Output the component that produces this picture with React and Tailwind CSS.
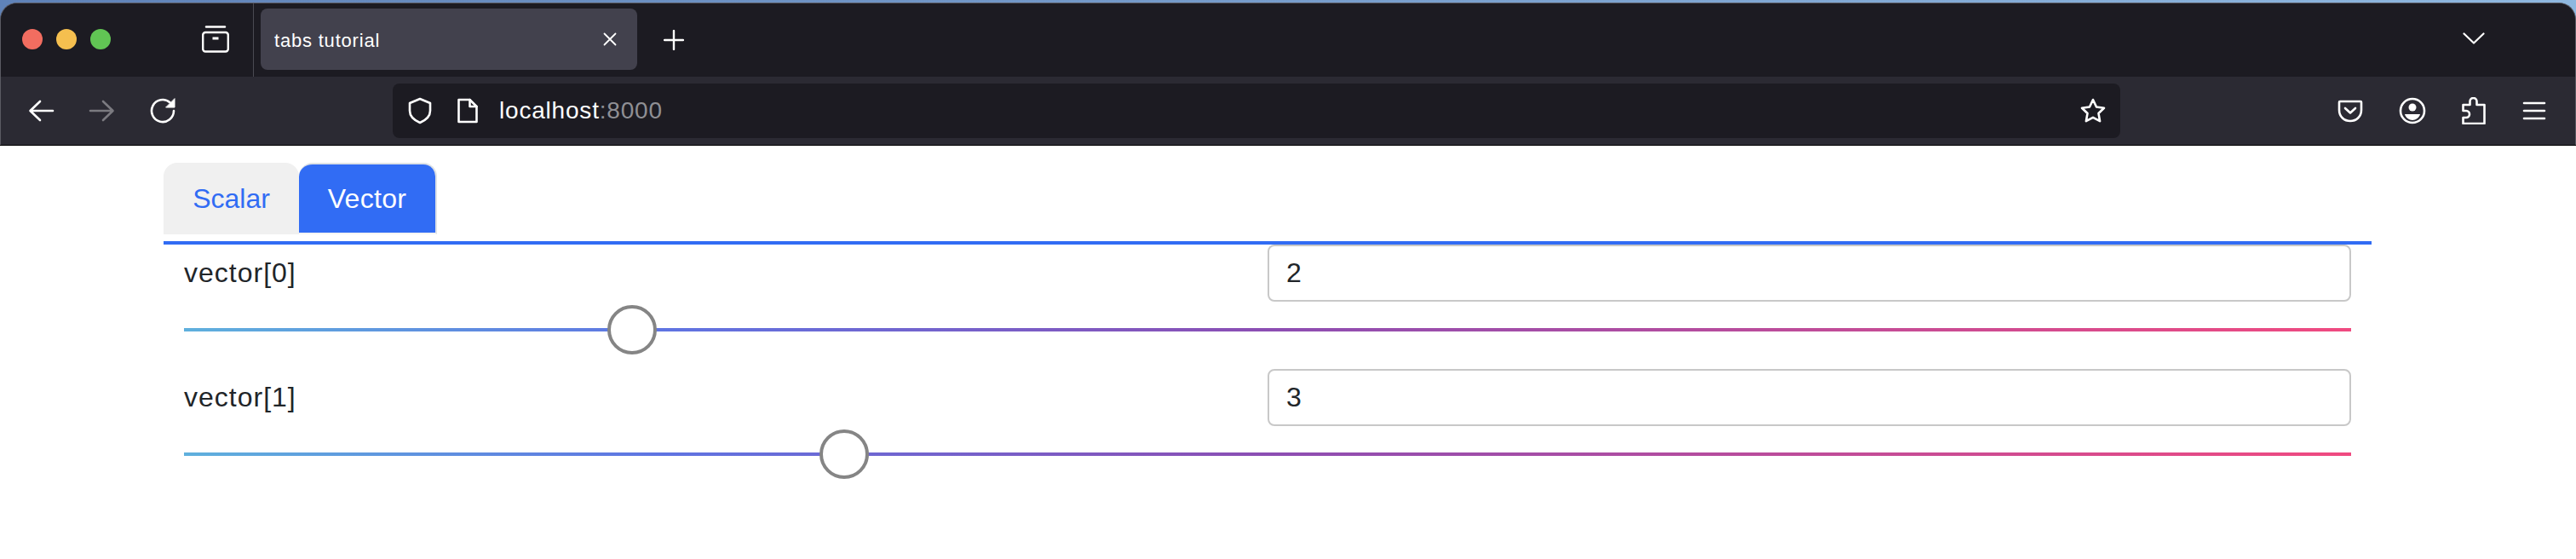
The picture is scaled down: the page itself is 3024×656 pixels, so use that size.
const sliderGradient = 'bg-[linear-gradient(90deg,#5fb0dd_0%,#5f74e2_22%,#8c4eb3_50%,#f04a80_100%)]';

function TrafficLights() {
  return (
    <div className="flex gap-[16px] ml-[25px] w-[211px]">
      <span className="w-[24px] h-[24px] rounded-full bg-[#f26d60]" />
      <span className="w-[24px] h-[24px] rounded-full bg-[#f5bf4f]" />
      <span className="w-[24px] h-[24px] rounded-full bg-[#61c554]" />
    </div>
  );
}

function Icon({ size = 32, className = '', children }) {
  return (
    <svg
      width={size}
      height={size}
      viewBox="0 0 32 32"
      fill="none"
      stroke="currentColor"
      strokeWidth="2.6"
      strokeLinecap="round"
      strokeLinejoin="round"
      className={`shrink-0 ${className}`}
    >
      {children}
    </svg>
  );
}

function Slider({ left }) {
  return (
    <div className={`relative h-[4px] w-full ${sliderGradient}`}>
      <div
        className="absolute top-[-27px] w-[58px] h-[58px] rounded-full bg-white border-[4px] border-[#858585]"
        style={{ left }}
      />
    </div>
  );
}

function VectorRow({ label, value, thumb }) {
  return (
    <div className="flex flex-col">
      <div className="flex items-center h-[67px]">
        <label className="w-[1272px] pb-[2px] text-[32px] tracking-[1px] text-[#212529]">{label}</label>
        <input
          readOnly
          value={value}
          className="flex-1 h-[67px] px-[20px] text-[32px] text-[#212529] bg-white border-2 border-[#c8c8c8] rounded-[8px] outline-none"
        />
      </div>
      <div className="mt-[31px] mb-[44px]">
        <Slider left={thumb} />
      </div>
    </div>
  );
}

export default function App() {
  return (
    <div className="w-[3024px] h-[656px] bg-white overflow-hidden font-['Liberation_Sans',sans-serif]">
      <div className="bg-[linear-gradient(90deg,#5f82b8,#8fb8e0)] pt-[3px]">
        <div className="rounded-t-[20px] overflow-hidden border-t border-x border-[#5a5a62] bg-[#2b2a33]">
          <div className="h-[86px] pb-[2px] bg-[#1c1b22] flex items-center">
            <TrafficLights />
            <div className="w-[60px] flex justify-start">
              <svg width="32" height="32" viewBox="0 0 32 32" fill="none" stroke="white" strokeWidth="2.4" strokeLinecap="round" strokeLinejoin="round">
                <path d="M5 1.500h22" />
                <rect x="1.200" y="8" width="29.600" height="22.500" rx="3" />
                <path d="M12.500 15h7" strokeWidth="3" strokeLinecap="butt" />
              </svg>
            </div>
            <div className="w-[1px] self-stretch -mb-[2px] bg-[#4a4a52]" />
            <div className="ml-[8px] w-[442px] h-[72px] bg-[#42414d] rounded-[8px] flex items-center pl-[16px] pr-[24px]">
              <span className="flex-1 pt-[2px] text-[22px] tracking-[0.8px] text-white">tabs tutorial</span>
              <svg width="16" height="16" viewBox="0 0 16 16" fill="none" stroke="white" strokeWidth="1.800" strokeLinecap="round">
                <path d="M1.500 1.500l13 13M14.500 1.500l-13 13" />
              </svg>
            </div>
            <svg width="24" height="24" viewBox="0 0 24 24" fill="none" stroke="white" strokeWidth="2.400" strokeLinecap="round" className="ml-[31px] mt-[1px]">
              <path d="M12 1v22M1 12h22" />
            </svg>
            <div className="flex-1" />
            <svg width="26" height="14" viewBox="0 0 26 14" fill="none" stroke="white" strokeWidth="2.200" strokeLinecap="round" strokeLinejoin="round" className="mr-[106px] -mt-[2px]">
              <path d="M1.500 1.500L13 12.500 24.500 1.500" />
            </svg>
          </div>
          <div className="h-[80px] bg-[#2b2a33] flex items-center text-white">
            <Icon className="ml-[31px]">
              <path d="M30 16H4M15 5L3.500 16 15 27" />
            </Icon>
            <Icon className="ml-[40px] text-[#7b7a80]">
              <path d="M2 16h26M17 5l11.500 11L17 27" />
            </Icon>
            <Icon className="ml-[40px]">
              <path d="M28 16a13 13 0 1 1-4.500-9.800" />
              <path d="M29 2v10H19z" fill="currentColor" strokeWidth="1" />
            </Icon>
            <div className="ml-[253px] w-[2028px] h-[64px] bg-[#1c1b22] rounded-[8px] flex items-center">
              <Icon className="ml-[16px]">
                <path d="M16 2L28 7v9c0 7-5 11-12 14C9 27 4 23 4 16V7z" />
              </Icon>
              <Icon className="ml-[24px]">
                <path d="M5.500 3h13l8 8v18h-21z" />
                <path d="M18.500 3v8h8" />
              </Icon>
              <span className="ml-[21px] text-[28px] tracking-[0.8px] text-white">
                localhost<span className="text-[#8f8f94]">:8000</span>
              </span>
              <div className="flex-1" />
              <Icon className="mr-[16px]">
                <path d="M16 3l4 8.500 9 1.200-6.500 6.300 1.600 9.200L16 23.800 7.900 28.200 9.500 19 3 12.700l9-1.200z" />
              </Icon>
            </div>
            <Icon className="ml-[254px]">
              <path d="M4 5h24a1 1 0 0 1 1 1v9c0 8-6 13-13 13S3 23 3 15V6a1 1 0 0 1 1-1z" />
              <path d="M10 13l6 5.500 6-5.500" />
            </Icon>
            <Icon className="ml-[41px]">
              <circle cx="16" cy="16" r="14" />
              <circle cx="16" cy="12" r="4.500" fill="currentColor" stroke="none" />
              <path d="M7 20h18c-1 4-5 7-9 7s-8-3-9-7z" fill="currentColor" stroke="none" />
            </Icon>
            <Icon className="ml-[40px]">
              <path d="M11.500 9V5a4 4 0 0 1 8 0v4h9v22h-25v-7H7a4 4 0 0 0 0-8H3.500V9z" />
            </Icon>
            <Icon className="ml-[39px]">
              <path d="M4 7h24M4 16h24M4 25h24" />
            </Icon>
          </div>
        </div>
      </div>
      <div className="h-[1px] bg-black" />
      <div className="px-[192px] w-[2976px] pt-[20px]">
        <div className="flex h-[84px] text-[32px]">
          <button className="w-[159px] h-[84px] bg-[#f0f0f0] text-[#316cf4] rounded-t-[16px]">Scalar</button>
          <button className="w-[162px] h-[84px] tracking-[0.3px] bg-[#316cf4] text-white rounded-t-[16px] border-2 border-[#dee2e6] border-l-0 border-b-[#f4f4f4]">Vector</button>
        </div>
        <div className="mt-[8px] h-[4px] bg-[#316cf4]" />
        <div className="px-[24px]">
          <VectorRow label="vector[0]" value="2" thumb={497} />
          <VectorRow label="vector[1]" value="3" thumb={746} />
        </div>
      </div>
    </div>
  );
}
